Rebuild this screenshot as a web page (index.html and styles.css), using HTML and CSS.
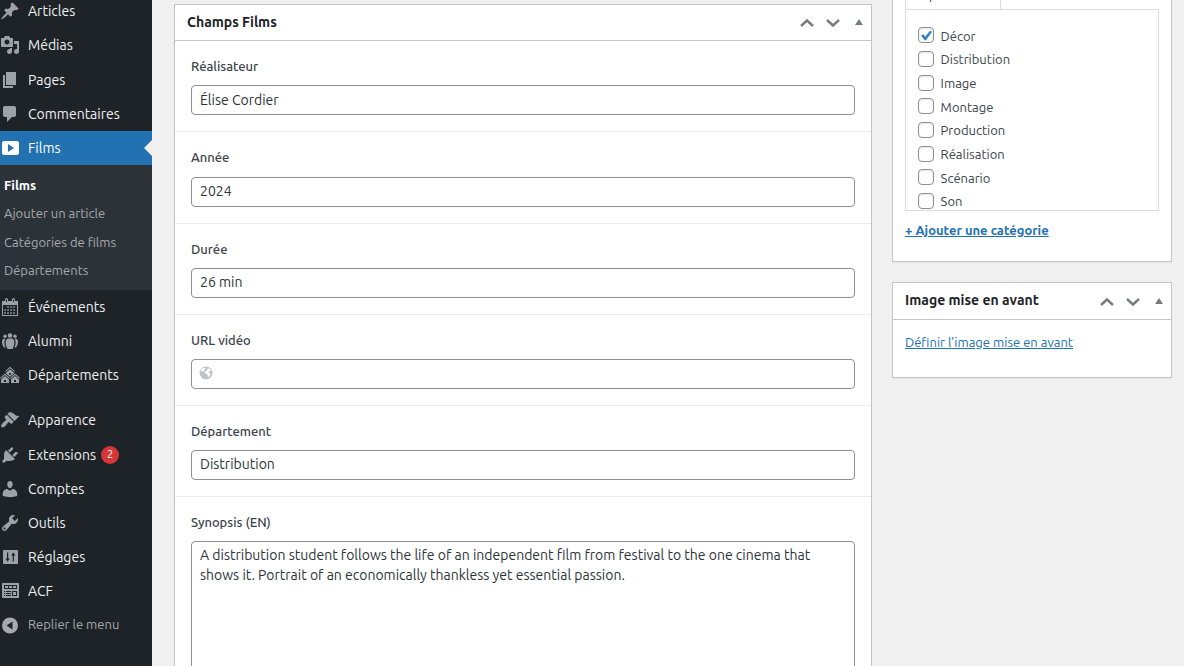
FILE: index.html
```html
<!DOCTYPE html>
<html lang="fr">
<head>
    <meta charset="UTF-8">
    <meta name="viewport" content="width=device-width, initial-scale=1.0">
    <title>Modifier Films</title>

    <link rel="stylesheet" href="styles.css">
</head>

<body>

<nav class="menu">
    <a class="menu-item"><svg viewBox="0 0 20 20"><path d="M10.44 3.02l1.82-1.82 6.36 6.35-1.83 1.82c-1.05-.68-2.48-.57-3.41.36l-.75.75c-.92.93-1.04 2.35-.35 3.41l-1.83 1.82-2.41-2.41-2.8 2.79c-.42.42-3.38 2.71-3.8 2.29s1.86-3.39 2.28-3.81l2.79-2.79L4.1 9.36l1.83-1.82c1.05.69 2.48.57 3.4-.36l.75-.75c.93-.92 1.05-2.35.36-3.41z"/></svg><span>Articles</span></a>
    <a class="menu-item"><svg viewBox="0 0 20 20"><path fill-rule="evenodd" d="M13 11V4c0-.55-.45-1-1-1h-1.67L9 1H5L3.67 3H2c-.55 0-1 .45-1 1v7c0 .55.45 1 1 1h10c.55 0 1-.45 1-1zM7 4.5c1.38 0 2.5 1.12 2.5 2.5S8.38 9.5 7 9.5 4.5 8.38 4.5 7 5.62 4.5 7 4.5zM14 6h5v10.5c0 1.38-1.12 2.5-2.5 2.5S14 17.88 14 16.5s1.12-2.5 2.5-2.5c.17 0 .34.02.5.05V9h-3V6zm-4 8.05V13h2v3.5c0 1.38-1.12 2.5-2.5 2.5S7 17.88 7 16.5 8.12 14 9.5 14c.17 0 .34.02.5.05z"/></svg><span>Médias</span></a>
    <a class="menu-item"><svg viewBox="0 0 20 20"><path d="M6 15V2h10v13H6zm-1 1h8v2H3V5h2v11z"/></svg><span>Pages</span></a>
    <a class="menu-item"><svg viewBox="0 0 20 20"><path d="M5 2h9c1.1 0 2 .9 2 2v7c0 1.1-.9 2-2 2h-2l-5 5v-5H5c-1.1 0-2-.9-2-2V4c0-1.1.9-2 2-2z"/></svg><span>Commentaires</span></a>
    <a class="menu-item current"><svg viewBox="0 0 20 20"><path fill-rule="evenodd" d="M19 15V5c0-1.1-.9-2-2-2H4c-1.1 0-2 .9-2 2v10c0 1.1.9 2 2 2h13c1.1 0 2-.9 2-2zM8 14V6l6 4z"/></svg><span>Films</span></a>
    <div class="submenu">
        <a class="active">Films</a>
        <a>Ajouter un article</a>
        <a>Catégories de films</a>
        <a>Départements</a>
    </div>
    <a class="menu-item"><svg viewBox="0 0 20 20"><path fill-rule="evenodd" d="M15 4h3v15H2V4h3V2.5a1.5 1.5 0 0 1 3 0V4h4V2.5a1.5 1.5 0 0 1 3 0zM6 2.5V5h1V2.5zM13 2.5V5h1V2.5zM3 8v10h14V8zM7.2 9.2h1.6v1.6H7.2zM10.2 9.2h1.6v1.6h-1.6zM13.2 9.2h1.6v1.6h-1.6zM4.2 12.2h1.6v1.6H4.2zM7.2 12.2h1.6v1.6H7.2zM10.2 12.2h1.6v1.6h-1.6zM13.2 12.2h1.6v1.6h-1.6zM4.2 15.2h1.6v1.6H4.2zM7.2 15.2h1.6v1.6H7.2zM10.2 15.2h1.6v1.6h-1.6zM13.2 15.2h1.6v1.6h-1.6z"/></svg><span>Événements</span></a>
    <a class="menu-item"><svg viewBox="0 0 20 20"><circle cx="10" cy="4.5" r="2.3"/><circle cx="5" cy="5.2" r="1.7"/><circle cx="15" cy="5.2" r="1.7"/><path d="M7.6 7.5h4.8c1.3.6 2 2.3 2 4.3 0 2.2-1 4.5-1.9 6.2h-5c-.9-1.7-1.9-4-1.9-6.2 0-2 .7-3.7 2-4.3z"/><path d="M5.6 7.7c-1 1.2-1.3 2.7-1.2 4.5.1 1.6.6 3.1 1.2 4.3H4c-1-1.3-2-3.3-2-5.4 0-1.7.6-2.9 1.6-3.4zM14.4 7.7c1 1.2 1.3 2.7 1.2 4.5-.1 1.6-.6 3.1-1.2 4.3H16c1-1.3 2-3.3 2-5.4 0-1.7-.6-2.9-1.6-3.4z"/></svg><span>Alumni</span></a>
    <a class="menu-item"><svg viewBox="0 0 20 20"><path fill-rule="evenodd" d="M14.27 6.87L10 3.14 5.73 6.87 5 6.14l5-4.38 5 4.38zM14 8.42l-4.05 3.43L6 8.38v-.74l4-3.5 4 3.5v.78zM11 9.7V8H9v1.7h2zm-1.73 4.03L5 10 .73 13.73 0 13l5-4.38L10 13zm10 0L15 10l-4.27 3.73L10 13l5-4.38L20 13zM5 11l4 3.5V18H1v-3.5zm10 0l4 3.5V18h-8v-3.5zm-9 6v-2H4v2h2zm10 0v-2h-2v2h2z"/></svg><span>Départements</span></a>
    <div class="separator"></div>
    <a class="menu-item"><svg viewBox="0 0 20 20"><path d="M14.48 11.06L7.41 3.99l1.5-1.5c.5-.56 2.3-.47 3.51.32 1.21.8 1.43 1.28 2.91 2.1 1.18.64 2.45 1.26 4.45.85zm-.71.71L6.7 4.7 4.93 6.47c-.39.39-.39 1.02 0 1.41l1.06 1.06c.39.39.39 1.03 0 1.42-.6.6-1.43 1.11-2.21 1.69-.35.26-.7.53-1.01.84C1.43 14.23.4 16.08 1.4 17.07c.99 1 2.84-.03 4.18-1.36.31-.31.58-.66.85-1.02.57-.78 1.08-1.61 1.69-2.21.39-.39 1.02-.39 1.41 0l1.06 1.06c.39.39 1.02.39 1.41 0z"/></svg><span>Apparence</span></a>
    <a class="menu-item"><svg viewBox="0 0 20 20"><path d="M13.11 4.36L9.87 7.6 8 5.73l3.24-3.24c.35-.34 1.05-.2 1.56.32.52.51.66 1.21.31 1.55zm-8 1.77l.91-1.12 9.01 9.01-1.19.84c-.71.71-2.63 1.16-3.82 1.16H6.14L4.9 17.26c-.59.59-1.54.59-2.12 0-.59-.58-.59-1.53 0-2.12l1.24-1.24v-3.88c0-1.13.4-3.19 1.09-3.89zm7.26 3.97l3.24-3.24c.34-.35 1.04-.21 1.55.31.52.51.66 1.21.31 1.55l-3.24 3.25z"/></svg><span>Extensions</span><b class="badge">2</b></a>
    <a class="menu-item"><svg viewBox="0 0 20 20"><path d="M10 9.25c-2.27 0-2.73-3.44-2.73-3.44C7 4.02 7.82 2 9.97 2c2.16 0 2.98 2.02 2.71 3.81 0 0-.41 3.44-2.68 3.44zm0 2.57L12.72 10c2.39 0 4.52 2.33 4.52 4.53v2.49s-3.65 1.13-7.24 1.13c-3.65 0-7.24-1.13-7.24-1.13v-2.49c0-2.25 1.94-4.48 4.47-4.48z"/></svg><span>Comptes</span></a>
    <a class="menu-item"><svg viewBox="0 0 20 20"><path fill-rule="evenodd" d="M16.68 9.77c-1.34 1.34-3.3 1.67-4.95.99l-5.41 6.52c-.99.99-2.59.99-3.58 0s-.99-2.59 0-3.57l6.52-5.42c-.68-1.65-.35-3.61.99-4.95 1.28-1.28 3.12-1.62 4.72-1.06l-2.89 2.89 2.82 2.82 2.86-2.87c.53 1.58.18 3.39-1.08 4.65zM3.81 16.21c.4.39 1.04.39 1.43 0 .4-.4.4-1.04 0-1.43-.39-.4-1.03-.4-1.43 0-.39.39-.39 1.03 0 1.43z"/></svg><span>Outils</span></a>
    <a class="menu-item"><svg viewBox="0 0 20 20"><path fill-rule="evenodd" d="M18 16V4c0-.55-.45-1-1-1H4c-.55 0-1 .45-1 1v12c0 .55.45 1 1 1h13c.55 0 1-.45 1-1zM7 5.5h1.2v6h1.6l-2.2 3-2.2-3H7zM12.7 14.5h1.2v-6h1.6l-2.2-3-2.2 3h1.6z"/></svg><span>Réglages</span></a>
    <a class="menu-item"><svg viewBox="0 0 20 20"><path fill-rule="evenodd" d="M19 16V3c0-.55-.45-1-1-1H3c-.55 0-1 .45-1 1v13c0 .55.45 1 1 1h15c.55 0 1-.45 1-1zM4 4h13v4H4zM4 10h1v1H4zM6 10h5v1H6zM12 10h5v5h-5zM4 12h1v1H4zM6 12h5v1H6zM4 14h1v1H4zM6 14h5v1H6z"/><path d="M5 5h3v2H5zM9 5h3v2H9zM13 5h3v2h-3zM13 11h3v3h-3z"/></svg><span>ACF</span></a>
    <a class="menu-item collapse"><svg viewBox="0 0 20 20"><path fill-rule="evenodd" d="M10 2.5a8 8 0 1 0 0 16 8 8 0 0 0 0-16zM12.5 6.5v8l-6-4z"/></svg><span>Replier le menu</span></a>
</nav>

<main class="content">
    <section class="postbox fields">
        <header class="postbox-header">
            <h2>Champs Films</h2>
            <div class="handles">
                <svg viewBox="0 0 20 20"><path d="M4 13l6-5.5 6 5.5"/></svg>
                <svg viewBox="0 0 20 20"><path d="M4 7l6 5.5L16 7"/></svg>
                <i class="toggle"></i>
            </div>
        </header>
        <div class="field">
            <label for="realisateur">Réalisateur</label>
            <input type="text" id="realisateur" value="Élise Cordier">
        </div>
        <div class="field">
            <label for="annee">Année</label>
            <input type="text" id="annee" value="2024">
        </div>
        <div class="field">
            <label for="duree">Durée</label>
            <input type="text" id="duree" value="26 min">
        </div>
        <div class="field">
            <label for="url">URL vidéo</label>
            <div class="url-wrap">
                <svg viewBox="0 0 14 14"><circle cx="7" cy="7" r="6.5"/><path d="M2.5 3.2L4 2l2.2.1.3 1.1-1.5.9-.4 1-1.3.6-1.5-.5zM8.2 3l1.6-.8 1.7 1.5.6 1.6-1.4-.2-1.1.7.8 1.3 1 .3-.4 1.8-1.3 1.8-1-.4-.2-2-1.3-1-1-.1-.5-1.3 1-1.3 1.6-.1z"/></svg>
                <input type="url" id="url">
            </div>
        </div>
        <div class="field">
            <label for="departement">Département</label>
            <input type="text" id="departement" value="Distribution">
        </div>
        <div class="field">
            <label for="synopsis">Synopsis (EN)</label>
            <textarea id="synopsis" spellcheck="false">A distribution student follows the life of an independent film from festival to the one cinema that
shows it. Portrait of an economically thankless yet essential passion.</textarea>
        </div>
    </section>

    <aside class="side">
        <section class="postbox categories">
            <div class="tabs"><span class="tab">Départements</span></div>
            <div class="checklist">
                <label><input type="checkbox" checked><span>Décor</span></label>
                <label><input type="checkbox"><span>Distribution</span></label>
                <label><input type="checkbox"><span>Image</span></label>
                <label><input type="checkbox"><span>Montage</span></label>
                <label><input type="checkbox"><span>Production</span></label>
                <label><input type="checkbox"><span>Réalisation</span></label>
                <label><input type="checkbox"><span>Scénario</span></label>
                <label><input type="checkbox"><span>Son</span></label>
            </div>
            <a class="link add">+ Ajouter une catégorie</a>
        </section>

        <section class="postbox thumbnail">
            <header class="postbox-header">
                <h2>Image mise en avant</h2>
                <div class="handles">
                    <svg viewBox="0 0 20 20"><path d="M4 13l6-5.5 6 5.5"/></svg>
                    <svg viewBox="0 0 20 20"><path d="M4 7l6 5.5L16 7"/></svg>
                    <i class="toggle"></i>
                </div>
            </header>
            <a class="link set-image">Définir l’image mise en avant</a>
        </section>
    </aside>
</main>

</body>
</html>
```

FILE: styles.css
```css
* {
    box-sizing: border-box;
}

body {
    margin: 0;
    height: 666px;
    overflow: hidden;
    display: flex;
    background: #f0f0f1;
    color: #3c434a;
    font-family: Ubuntu, "Noto Sans", sans-serif;
    font-size: 13px;
}

/* Left admin menu */
.menu {
    width: 152px;
    height: 672px;
    margin-top: -5.88px; /* page is scrolled a little */
    flex: none;
    background: #1d2327;
}

.menu-item {
    display: flex;
    align-items: center;
    height: 34.21px;
    color: #f0f0f1;
    font-size: 14px;
    white-space: nowrap;
}

.menu-item svg {
    width: 20px;
    height: 20px;
    margin-right: 8px;
    fill: #9ca2a7;
}

.menu-item.current {
    position: relative;
    background: #2271b1;
    color: #fff;
}

.menu-item.current svg {
    fill: #fff;
}

/* Arrow pointing at the content */
.menu-item.current::after {
    content: "";
    position: absolute;
    right: 0;
    top: 9px;
    border: 8px solid transparent;
    border-left-width: 0;
    border-right-color: #f0f0f1;
}

.menu-item.collapse {
    height: 33.4px;
    color: #a7aaad;
    font-size: 13px;
}

.menu-item.collapse svg {
    fill: #a7aaad;
}

.menu-item.collapse span {
    padding-bottom: 2.6px;
}

.submenu {
    padding: 5.9px 0 5.05px 4px;
    background: #2c3338;
}

.submenu a {
    display: block;
    line-height: 28.4px;
    color: #a7aaad;
}

.submenu .active {
    color: #fff;
    font-weight: 600;
}

.separator {
    height: 11.07px;
}

.badge {
    width: 18px;
    height: 18px;
    margin: 1px 0 0 5px;
    border-radius: 9px;
    background: #d63638;
    color: #fff;
    font-size: 11px;
    font-weight: 400;
    line-height: 17px;
    text-align: center;
}

/* Content columns */
.content {
    display: flex;
    align-items: flex-start;
    gap: 20px;
    padding-left: 22px;
}

.postbox {
    background: #fff;
    border: 1px solid #c3c4c7;
    box-shadow: 0 1px 1px rgba(0, 0, 0, 0.04);
}

.postbox-header {
    display: flex;
    align-items: center;
    justify-content: space-between;
    height: 36px;
    padding: 0 5px 1px 12px;
    border-bottom: 1px solid #c3c4c7;
}

.postbox-header h2 {
    margin: 0;
    color: #1d2327;
    font-size: 14px;
    font-weight: 600;
}

.handles {
    display: flex;
    align-items: center;
    padding-top: 2px;
}

.handles svg {
    width: 20px;
    height: 20px;
    margin-right: 6px;
    fill: none;
    stroke: #787c82;
    stroke-width: 2.4;
}

.toggle {
    margin: 0 3px 2px 7px;
    border: 4px solid transparent;
    border-top-width: 0;
    border-bottom: 6px solid #787c82;
}

.handles svg + .toggle {
    margin-left: 6px;
}

/* Film fields */
.fields {
    width: 698px;
    margin-top: 4.22px;
}

.field {
    padding: 16px;
    border-bottom: 1px solid #eaecf0;
}

.field label {
    display: block;
    margin-bottom: 10px;
    line-height: 18.2px;
    font-weight: 500;
}

.field input,
.field textarea {
    display: block;
    width: 100%;
    height: 30px;
    padding: 0 8px 1.8px;
    border: 1px solid #8c8f94;
    border-radius: 4px;
    background: #fff;
    color: #2c3338;
    font-family: inherit;
    font-size: 14px;
}

.field textarea {
    height: 170px;
    padding: 3px 8px;
    line-height: 20px;
    resize: none;
    white-space: pre;
    overflow: hidden;
}

.url-wrap {
    position: relative;
}

.url-wrap svg {
    position: absolute;
    left: 8px;
    top: 7px;
    width: 14px;
    height: 14px;
    fill: #fff;
}

.url-wrap circle {
    fill: #bec3c8;
}

/* Right column */
.side {
    width: 280px;
}

.categories {
    height: 282px;
    margin-top: -20px;
    padding: 0 12px;
}

.tabs {
    height: 28px;
    display: flex;
}

.tab {
    width: 96px;
    padding: 5px 8px;
    border: 1px solid #dcdcde;
    border-bottom: 0;
    color: #2c3338;
    font-size: 12px;
    line-height: 17px;
}

.checklist {
    height: 202px;
    padding: 13.5px 12px 0;
    border: 1px solid #dcdcde;
    overflow: hidden;
}

.checklist label {
    display: flex;
    align-items: center;
    height: 23.65px;
}

.checklist span {
    padding-top: 1px;
}

.checklist input {
    appearance: none;
    width: 16px;
    height: 16px;
    margin: 0 6.6px 0 0;
    border: 1px solid #8c8f94;
    border-radius: 4px;
    box-shadow: inset 0 1px 2px rgba(0, 0, 0, 0.1);
    position: relative;
}

/* Blue tick */
.checklist input:checked::before {
    content: "";
    position: absolute;
    left: -1px;
    top: -1px;
    width: 16px;
    height: 16px;
    background: #3582c4;
    clip-path: polygon(3px 8.2px, 5.3px 7px, 7.2px 9.4px, 12px 3.5px, 14px 4.5px, 8px 13px, 6.6px 13px);
}

.link {
    display: inline-block;
    color: #2271b1;
    text-decoration: underline;
    line-height: 18px;
}

.add {
    margin-top: 10px;
    font-weight: 600;
}

.thumbnail {
    height: 96px;
    margin-top: 20px;
}

.thumbnail .postbox-header {
    height: 37px;
}

.thumbnail h2 {
    padding-bottom: 2px;
}

.set-image {
    margin: 13px 12px;
}
```
